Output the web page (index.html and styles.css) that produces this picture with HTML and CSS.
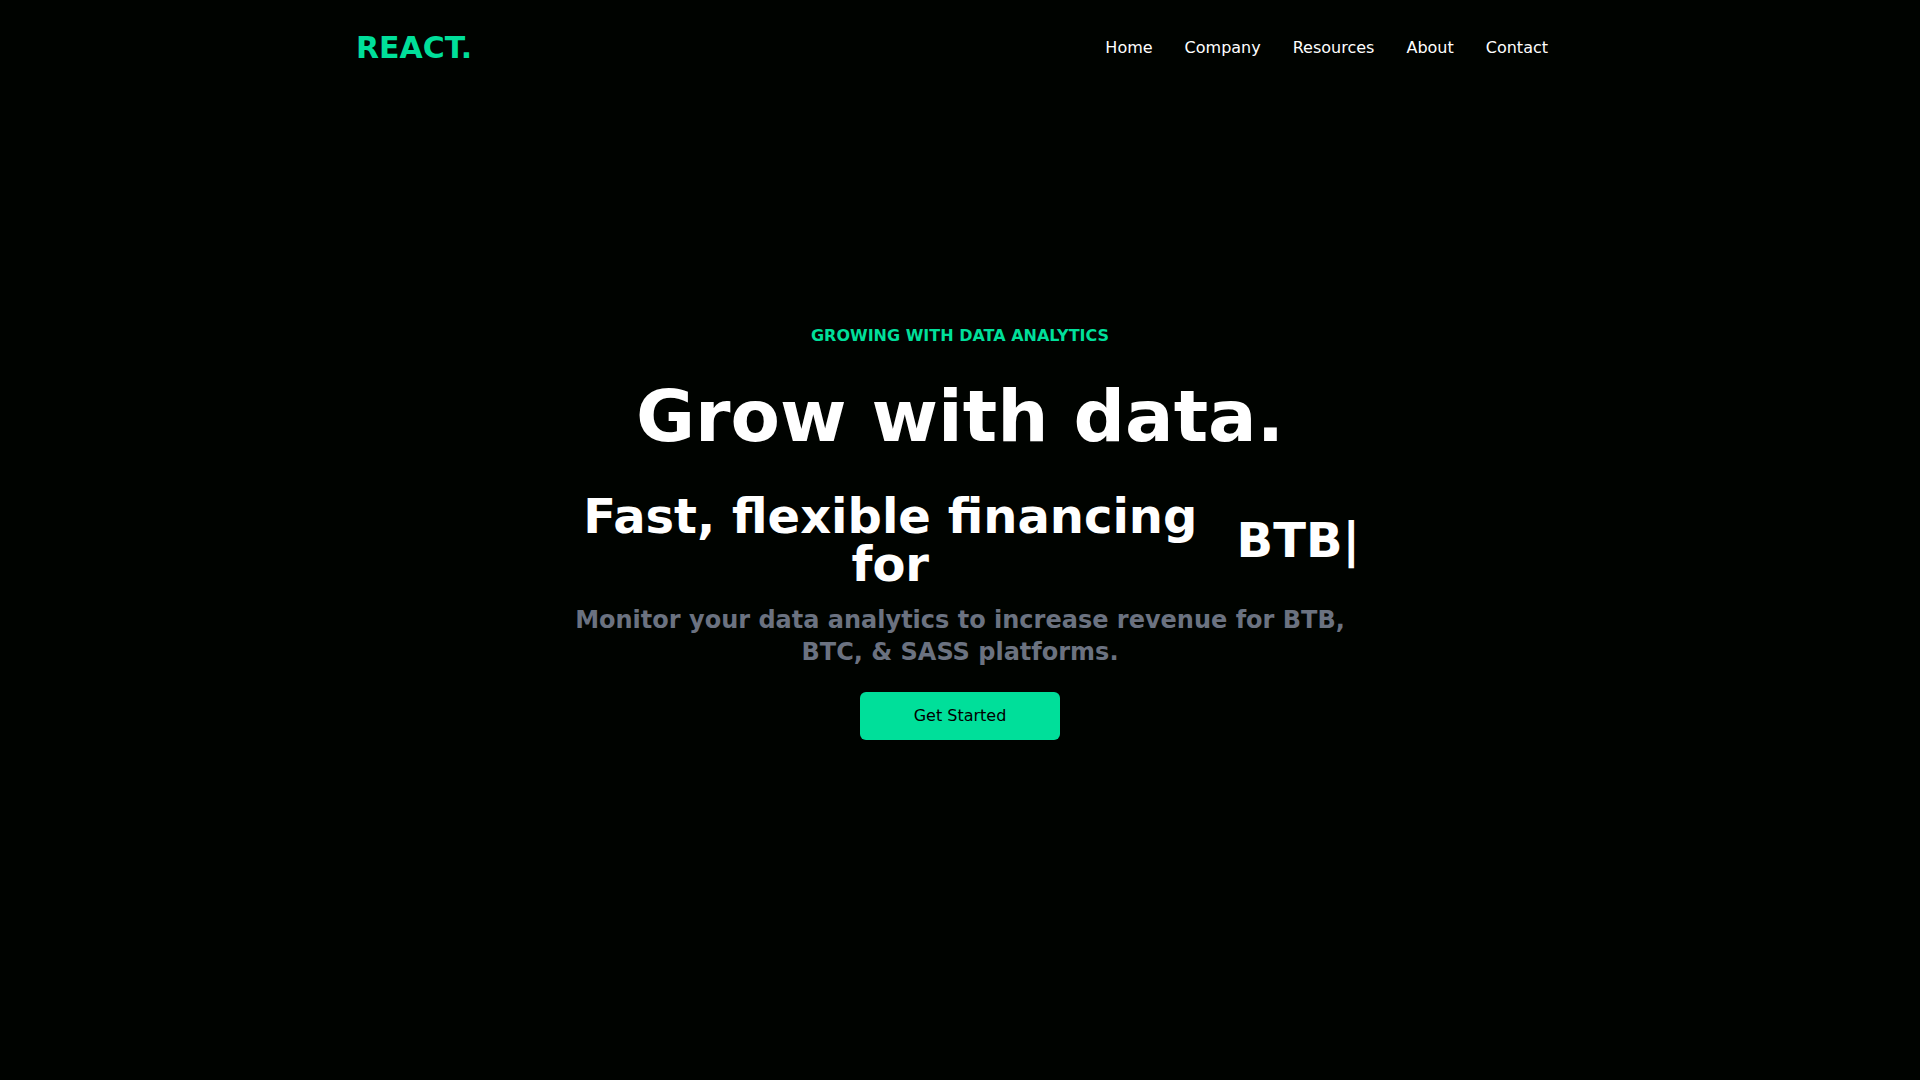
FILE: index.html
```html
<!DOCTYPE html>
<html lang="en">
<head>
<meta charset="utf-8">
<title>REACT.</title>
<link rel="stylesheet" href="styles.css">
</head>
<body>
  <div class="navbar">
    <h1 class="logo">REACT.</h1>
    <ul class="nav">
      <li>Home</li>
      <li>Company</li>
      <li>Resources</li>
      <li>About</li>
      <li>Contact</li>
    </ul>
  </div>
  <div class="hero">
    <div class="hero-inner">
      <p class="eyebrow">GROWING WITH DATA ANALYTICS</p>
      <h1 class="title">Grow with data.</h1>
      <div class="typed-row">
        <p class="subtitle">Fast, flexible financing for</p>
        <span class="typed">BTB<span class="cursor">|</span></span>
      </div>
      <p class="desc">Monitor your data analytics to increase revenue for BTB, BTC, &amp; SASS platforms.</p>
      <button class="cta">Get Started</button>
    </div>
  </div>
</body>
</html>
```

FILE: styles.css
```css
* { box-sizing: border-box; margin: 0; padding: 0; }
html, body {
  background: #000300;
  font-family: "DejaVu Sans", sans-serif;
  color: #fff;
  line-height: 1.5;
}
.navbar {
  display: flex;
  justify-content: space-between;
  align-items: center;
  height: 96px;
  max-width: 1240px;
  margin: 0 auto;
  padding: 0 16px;
  color: #fff;
  position: relative;
  z-index: 1;
}
.logo {
  width: 100%;
  font-size: 30px;
  line-height: 36px;
  font-weight: 700;
  color: #00df9a;
}
.nav {
  display: flex;
  list-style: none;
}
.nav li {
  padding: 16px;
  font-size: 16px;
  line-height: 24px;
  white-space: nowrap;
}
.hero {
  color: #fff;
}
.hero-inner {
  max-width: 800px;
  width: 100%;
  height: 1080px;
  margin: -96px auto 0;
  text-align: center;
  display: flex;
  flex-direction: column;
  justify-content: center;
}
.eyebrow {
  color: #00df9a;
  font-weight: 700;
  padding: 8px;
  font-size: 16px;
  line-height: 24px;
}
.title {
  font-size: 72px;
  line-height: 1;
  font-weight: 700;
  padding: 24px 0;
}
.typed-row {
  display: flex;
  justify-content: center;
  align-items: center;
}
.subtitle {
  font-size: 48px;
  line-height: 1;
  font-weight: 700;
  padding: 16px 0;
}
.typed {
  font-size: 48px;
  line-height: 1;
  font-weight: 700;
  padding-left: 16px;
  white-space: nowrap;
}
.cursor {
  font-weight: 700;
}
.desc {
  font-size: 24px;
  line-height: 32px;
  font-weight: 700;
  color: #6b7280;
}
.cta {
  background: #00df9a;
  width: 200px;
  border: none;
  border-radius: 6px;
  font-family: inherit;
  font-size: 16px;
  line-height: 24px;
  font-weight: 500;
  margin: 24px auto;
  padding: 12px 0;
  color: #000;
}
```
